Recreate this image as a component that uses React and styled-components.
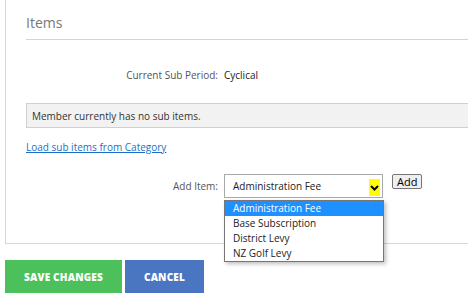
import styled, { createGlobalStyle } from "styled-components";

const GlobalStyle = createGlobalStyle`
  html, body {
    margin: 0;
    padding: 0;
    background: #fff;
    font-family: "Open Sans", "Liberation Sans", sans-serif;
  }
`;

const Page = styled.div`
  width: 468px;
  height: 303px;
  overflow: hidden;
`;

const Panel = styled.section`
  margin-left: 5px;
  border-left: 1px solid #d8d8d8;
  border-bottom: 1px solid #d8d8d8;
  padding: 13px 0 0 20px;
  height: 244px;
  box-sizing: border-box;
`;

const Heading = styled.h2`
  margin: 0;
  font-size: 14px;
  font-weight: 400;
  color: #777;
  line-height: 20px;
  padding-bottom: 6px;
  border-bottom: 1px solid #d4d4d4;
`;

const FieldRow = styled.div`
  display: flex;
  align-items: center;
  margin-top: ${(p) => p.$top}px;
`;

const Label = styled.div`
  width: 192px;
  text-align: right;
  padding-right: 6px;
  font-size: 10px;
  color: #555;
`;

const Value = styled.div`
  font-size: 10px;
  color: #222;
`;

const Notice = styled.div`
  margin-top: 21px;
  background: #f2f2f2;
  border: 1px solid #d0d0d0;
  border-right: none;
  height: 25px;
  box-sizing: border-box;
  padding-left: 5px;
  display: flex;
  align-items: center;
  font-size: 10px;
  color: #333;
`;

const LoadLink = styled.a`
  display: inline-block;
  margin-top: 12px;
  font-size: 10px;
  color: #1a6fc9;
  text-decoration: underline;
`;

const SelectWrap = styled.div`
  position: relative;
`;

const SelectBox = styled.div`
  width: 159px;
  height: 24px;
  box-sizing: border-box;
  border: 1px solid #a9a9a9;
  display: flex;
  align-items: center;
  justify-content: space-between;
  padding: 0 2px 0 8px;
  font-size: 10px;
  color: #222;
`;

const Arrow = styled.span`
  width: 11px;
  height: 17px;
  background: #ffff00;
  display: flex;
  align-items: center;
  justify-content: center;
  margin-top: 3px;
`;

const AddButton = styled.button`
  margin-left: 9px;
  align-self: flex-start;
  height: 15px;
  padding: 0 4px;
  font-family: "Open Sans", "Liberation Sans", sans-serif;
  font-size: 11px;
  line-height: 13px;
  color: #000;
  background: #efefef;
  border: 1px solid #767676;
  border-radius: 2px;
`;

const OptionList = styled.ul`
  position: absolute;
  top: 26px;
  left: 0;
  width: 160px;
  margin: 0;
  padding: 0;
  list-style: none;
  background: #fff;
  border: 1px solid #767676;
  box-sizing: border-box;
  box-shadow: 2px 2px 4px rgba(0, 0, 0, 0.25);
  z-index: 5;
`;

const Option = styled.li`
  height: 15px;
  line-height: 15px;
  padding-left: 8px;
  font-size: 10px;
  color: ${(p) => (p.$active ? "#fff" : "#222")};
  background: ${(p) => (p.$active ? "#1e90ff" : "transparent")};
`;

const Actions = styled.div`
  display: flex;
  gap: 3px;
  margin: 16px 0 0 5px;
`;

const ActionButton = styled.button`
  height: 33px;
  width: ${(p) => p.$width}px;
  border: none;
  background: ${(p) => p.$bg};
  color: #fff;
  font-family: "Open Sans", "Liberation Sans", sans-serif;
  font-weight: 800;
  font-size: 10px;
  letter-spacing: 0.2px;
  text-transform: uppercase;
`;

const options = ["Administration Fee", "Base Subscription", "District Levy", "NZ Golf Levy"];

const App = () => {
  return (
    <Page>
      <GlobalStyle />
      <Panel>
        <Heading>Items</Heading>
        <FieldRow $top={28}>
          <Label>Current Sub Period:</Label>
          <Value>Cyclical</Value>
        </FieldRow>
        <Notice>Member currently has no sub items.</Notice>
        <LoadLink href="#">Load sub items from Category</LoadLink>
        <FieldRow $top={18}>
          <Label>Add Item:</Label>
          <SelectWrap>
            <SelectBox>
              Administration Fee
              <Arrow>
                <svg width="9" height="6" viewBox="0 0 9 6">
                  <path d="M1 1 L4.5 4.5 L8 1" stroke="#000" strokeWidth="2" fill="none" />
                </svg>
              </Arrow>
            </SelectBox>
            <OptionList>
              {options.map((o, i) => (
                <Option key={o} $active={i === 0}>{o}</Option>
              ))}
            </OptionList>
          </SelectWrap>
          <AddButton>Add</AddButton>
        </FieldRow>
      </Panel>
      <Actions>
        <ActionButton $bg="#4cc05a" $width={117}>Save Changes</ActionButton>
        <ActionButton $bg="#4a76c1" $width={79}>Cancel</ActionButton>
      </Actions>
    </Page>
  );
};

export default App;
